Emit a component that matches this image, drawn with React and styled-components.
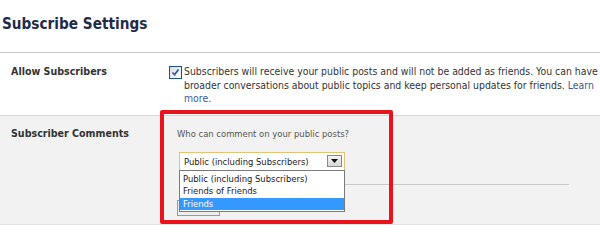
import React from 'react';
import styled, { createGlobalStyle } from 'styled-components';

const GlobalStyle = createGlobalStyle`
  html, body {
    margin: 0;
    padding: 0;
    background: #ffffff;
  }
  body {
    font-family: 'DejaVu Sans Condensed', 'DejaVu Sans', sans-serif;
    font-size: 9.4px;
    color: #333333;
    width: 600px;
    height: 228px;
    overflow: hidden;
  }
`;

const SettingsPage = styled.div`
  position: relative;
  width: 600px;
  height: 228px;
`;

const Header = styled.div`
  height: 53px;
  box-sizing: border-box;
  padding: 13px 0 0 2px;
  border-bottom: 1px solid #c6c6c6;
`;

const Title = styled.h2`
  margin: 0;
  font-size: 15.2px;
  line-height: 22px;
  font-weight: bold;
  color: #1f2b48;
`;

const Row = styled.div`
  display: flex;
  box-sizing: border-box;
  height: ${(p) => p.height}px;
  padding-top: ${(p) => p.top}px;
  background: ${(p) => (p.shaded ? '#f2f2f2' : '#ffffff')};
  border-top: ${(p) => (p.shaded ? '1px solid #d6d6d6' : 'none')};
  border-bottom: ${(p) => (p.shaded ? '1px solid #e2e2e2' : 'none')};
`;

const Label = styled.div`
  width: 158px;
  flex: none;
  padding-left: 11px;
  box-sizing: border-box;
  font-weight: bold;
  font-size: 10.6px;
  line-height: 13.5px;
  color: #333333;
`;

const Content = styled.div`
  flex: 1;
  display: flex;
  flex-direction: column;
`;

const CheckLine = styled.div`
  display: flex;
  align-items: flex-start;
  gap: 2px;
  padding-left: 11px;
`;

const CheckBox = styled.span`
  flex: none;
  width: 11px;
  height: 11px;
  margin-top: 1px;
  border: 1px solid #1c5180;
  background: linear-gradient(135deg, #dcdcd6, #ffffff);
  display: flex;
  align-items: center;
  justify-content: center;
`;

const Paragraph = styled.p`
  margin: 0;
  font-size: 10.4px;
  line-height: 13.5px;
  color: #333333;
`;

const Link = styled.a`
  color: #3b5998;
  text-decoration: none;
`;

const Question = styled.div`
  padding-left: 19px;
  line-height: 13.5px;
  color: #555555;
`;

const Controls = styled.div`
  position: relative;
  margin: 11px 0 0 21px;
  display: flex;
  flex-direction: column;
`;

const Select = styled.div`
  width: 166px;
  height: 19px;
  box-sizing: border-box;
  border: 1px solid #e2c377;
  background: #ffffff;
  display: flex;
  align-items: center;
  justify-content: space-between;
  padding: 0 2px 0 4px;
`;

const SelectText = styled.span`
  color: #222222;
`;

const ArrowButton = styled.span`
  width: 15px;
  height: 12px;
  box-sizing: border-box;
  border: 1px solid #8a8a8a;
  background: linear-gradient(#f4f4f4, #d8d8d8);
  display: flex;
  align-items: center;
  justify-content: center;
`;

const Divider = styled.div`
  height: 1px;
  width: 390px;
  background: #c9c9c9;
  margin-top: 13px;
`;

const SaveButton = styled.div`
  margin-top: 15px;
  margin-left: -2px;
  width: 43px;
  height: 16px;
  box-sizing: border-box;
  border: 1px solid #999999;
  background: #eeeeee;
`;

const OptionList = styled.ul`
  position: absolute;
  top: 18px;
  left: 0;
  width: 166px;
  box-sizing: border-box;
  margin: 0;
  padding: 2px 0 1px;
  list-style: none;
  background: #ffffff;
  border: 1px solid #7a7a7a;
`;

const Option = styled.li`
  height: 12.5px;
  line-height: 12.5px;
  padding-left: 3px;
  color: ${(p) => (p.selected ? '#ffffff' : '#1a1a1a')};
  background: ${(p) => (p.selected ? '#3399ff' : 'transparent')};
`;

const Highlight = styled.div`
  position: absolute;
  left: 160px;
  top: 110px;
  width: 233px;
  height: 114px;
  box-sizing: border-box;
  border: 4px solid #e8131b;
  border-radius: 2px;
  pointer-events: none;
`;

const options = ['Public (including Subscribers)', 'Friends of Friends', 'Friends'];

export default function App() {
  return (
    <SettingsPage>
      <GlobalStyle />
      <Header>
        <Title>Subscribe Settings</Title>
      </Header>

      <Row height={62} top={12}>
        <Label>Allow Subscribers</Label>
        <Content>
          <CheckLine>
            <CheckBox>
              <svg width="9" height="9" viewBox="0 0 9 9">
                <path d="M1.5 4.5 L3.5 6.8 L7.5 1.5" fill="none" stroke="#2a4fb0" strokeWidth="1.6" />
              </svg>
            </CheckBox>
            <Paragraph>
              Subscribers will receive your public posts and will not be added as friends. You can have
              broader conversations about public topics and keep personal updates for friends.{' '}
              <Link href="#">Learn more.</Link>
            </Paragraph>
          </CheckLine>
        </Content>
      </Row>

      <Row shaded height={110} top={11}>
        <Label>Subscriber Comments</Label>
        <Content>
          <Question>Who can comment on your public posts?</Question>
          <Controls>
            <Select>
              <SelectText>Public (including Subscribers)</SelectText>
              <ArrowButton>
                <svg width="7" height="4" viewBox="0 0 7 4">
                  <path d="M0 0 H7 L3.5 4 Z" fill="#111111" />
                </svg>
              </ArrowButton>
            </Select>
            <Divider />
            <SaveButton />
            <OptionList>
              {options.map((o) => (
                <Option key={o} selected={o === 'Friends'}>
                  {o}
                </Option>
              ))}
            </OptionList>
          </Controls>
        </Content>
      </Row>

      <Highlight />
    </SettingsPage>
  );
}
